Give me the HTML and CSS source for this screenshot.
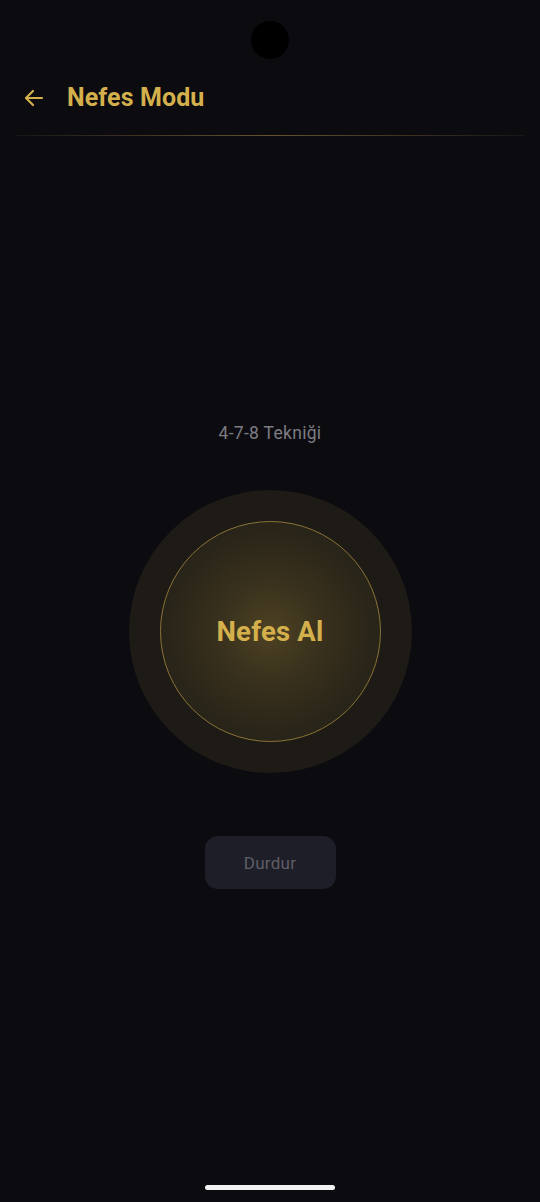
FILE: index.html
```html
<!DOCTYPE html>
<html lang="tr">
<head>
<meta charset="utf-8">
<link rel="stylesheet" href="styles.css">
</head>
<body>
<div class="screen">
  <div class="status"><div class="camera"></div></div>
  <header class="header">
    <svg class="back" width="24" height="24" viewBox="0 0 24 24" fill="none" stroke="#d4b04c" stroke-width="2.2" stroke-linecap="round" stroke-linejoin="round">
      <path d="M20 12H4.5"/>
      <path d="M11 5l-7 7 7 7"/>
    </svg>
    <h1 class="title">Nefes Modu</h1>
  </header>
  <div class="divider"></div>
  <main class="main">
    <p class="technique">4-7-8 Tekniği</p>
    <div class="outer">
      <div class="inner"><span class="phase">Nefes Al</span></div>
    </div>
    <button class="stop">Durdur</button>
  </main>
  <div class="home-indicator"></div>
</div>
</body>
</html>
```
FILE: styles.css
```css
* { box-sizing: border-box; }
html, body {
  margin: 0;
  padding: 0;
  background: #0b0b10;
}
body {
  font-family: Roboto, "Noto Sans", "Liberation Sans", sans-serif;
}
.screen {
  width: 540px;
  height: 1202px;
  display: flex;
  flex-direction: column;
  position: relative;
  overflow: hidden;
}
.status {
  height: 60px;
  display: flex;
  justify-content: center;
  padding-top: 21px;
}
.camera {
  width: 38px;
  height: 38px;
  border-radius: 50%;
  background: #000;
}
.header {
  height: 75px;
  display: flex;
  align-items: center;
  padding-left: 22px;
  gap: 21px;
}
.back { display: block; }
.title {
  margin: 0;
  font-size: 25px;
  font-weight: 700;
  color: #d4b04c;
  letter-spacing: 0.1px;
}
.divider {
  height: 1px;
  margin: 0 15px;
  background: linear-gradient(90deg, rgba(120,100,60,0.12) 0%, rgba(160,130,70,0.6) 50%, rgba(120,100,60,0.12) 100%);
}
.main {
  display: flex;
  flex-direction: column;
  align-items: center;
  padding-top: 287px;
}
.technique {
  margin: 0;
  font-size: 17.5px;
  line-height: 20px;
  color: #7c7c82;
  letter-spacing: 0.3px;
}
.outer {
  margin-top: 47px;
  width: 283px;
  height: 283px;
  border-radius: 50%;
  background: #1e1b16;
  display: flex;
  align-items: center;
  justify-content: center;
}
.inner {
  width: 221px;
  height: 221px;
  border-radius: 50%;
  border: 1px solid #8a7336;
  background: radial-gradient(circle at center, #4e4223 0%, #3a321d 30%, #2a2519 65%, #231f17 100%);
  display: flex;
  align-items: center;
  justify-content: center;
}
.phase {
  font-size: 27.5px;
  font-weight: 700;
  color: #d4b04c;
  letter-spacing: 0.2px;
}
.stop {
  margin-top: 63px;
  width: 131px;
  height: 53px;
  border: none;
  border-radius: 13px;
  background: #1e1e28;
  color: #5e5e66;
  font-family: Roboto, "Noto Sans", "Liberation Sans", sans-serif;
  font-size: 17px;
  letter-spacing: 0.3px;
}
.home-indicator {
  position: absolute;
  left: 205px;
  bottom: 12px;
  width: 130px;
  height: 5px;
  border-radius: 3px;
  background: #f2f2f2;
}
```
